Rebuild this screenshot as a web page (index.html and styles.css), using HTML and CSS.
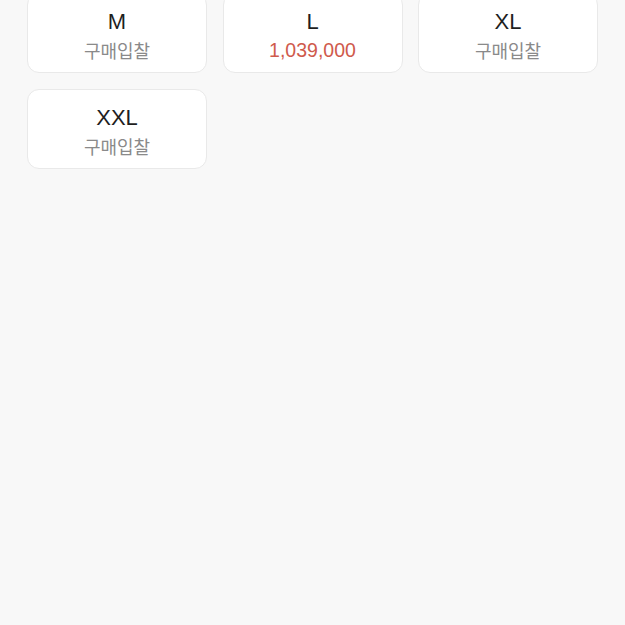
FILE: index.html
```html
<!DOCTYPE html>
<html lang="ko">

<head>
    <title>사이즈 선택</title>
    <link rel="stylesheet" href="styles.css">
</head>

<body>
    <div class="size-grid">
        <div class="size-card">
            <p class="size-name">M</p>
            <p class="size-price">구매입찰</p>
        </div>
        <div class="size-card">
            <p class="size-name">L</p>
            <p class="size-price has-price">1,039,000</p>
        </div>
        <div class="size-card">
            <p class="size-name">XL</p>
            <p class="size-price">구매입찰</p>
        </div>
        <div class="size-card">
            <p class="size-name">XXL</p>
            <p class="size-price">구매입찰</p>
        </div>
    </div>
</body>

</html>
```

FILE: styles.css
```css
body {
    margin: 0;
    font-family: "Liberation Sans", "Noto Sans CJK KR", sans-serif;
    background-color: #f8f8f8;
    height: 625px;
    overflow: hidden;
}

.size-grid {
    display: grid;
    grid-template-columns: repeat(3, 180px);
    column-gap: 15.5px;
    row-gap: 16px;
    margin-top: -7px;
    padding-left: 27px;
}

.size-card {
    height: 80px;
    box-sizing: border-box;
    padding-top: 6px;
    background-color: #ffffff;
    border: 1px solid #e9e9e9;
    border-radius: 12px;
    display: flex;
    flex-direction: column;
    align-items: center;
    justify-content: center;
    text-align: center;
}

.size-name {
    margin: 0;
    font-size: 22px;
    color: #1e1e1e;
    line-height: 28px;
}

.size-price {
    margin: 0;
    font-size: 18px;
    color: #8a8a8a;
    line-height: 28px;
    font-family: "Noto Sans CJK KR", "Liberation Sans", sans-serif;
}

.size-price.has-price {
    color: #cf5a4c;
    font-family: "Liberation Sans", sans-serif;
    font-size: 19.5px;
}
```
